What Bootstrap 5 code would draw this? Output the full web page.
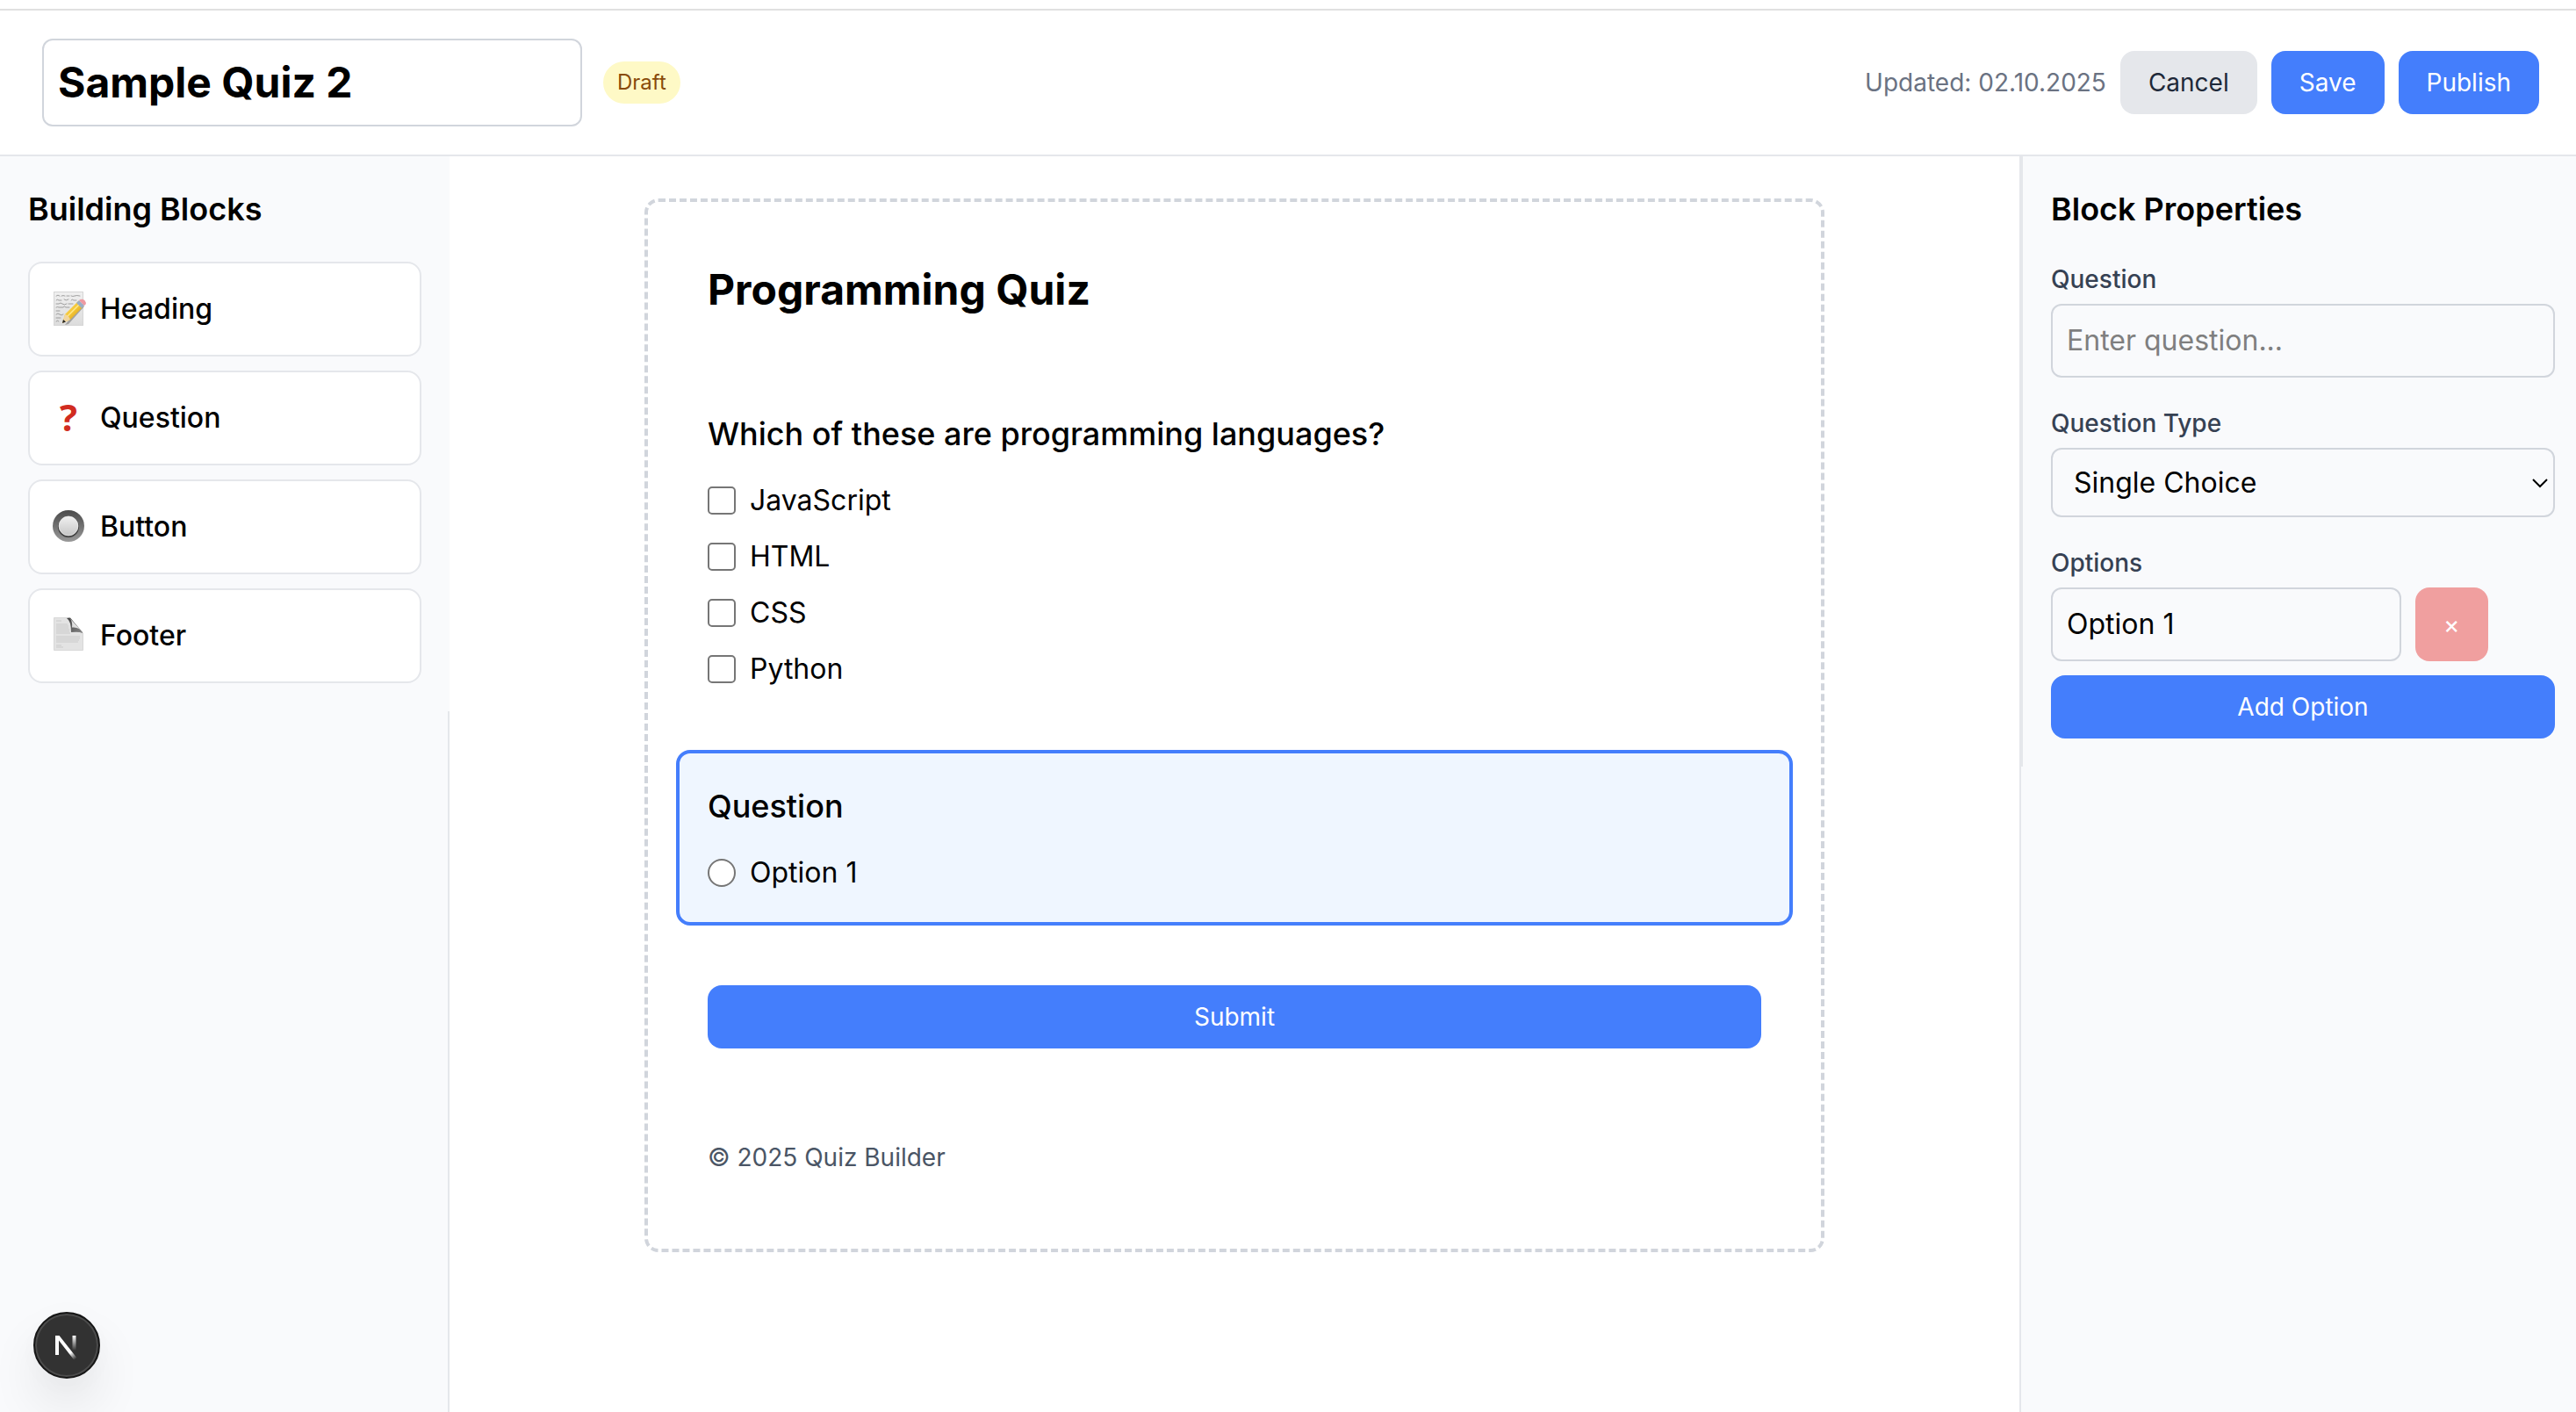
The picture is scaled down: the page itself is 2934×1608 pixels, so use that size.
<!DOCTYPE html>
<html lang="en">
<head>
<meta charset="utf-8">
<meta name="viewport" content="width=device-width, initial-scale=1">
<title>Quiz Builder</title>
<link rel="stylesheet" href="https://cdn.jsdelivr.net/npm/bootstrap@5.3.0/dist/css/bootstrap.min.css">
<style>
  :root { --qb-line: #e5e7eb; --qb-field: #d1d5dc; --qb-blue: #447efc; --qb-panel: #f9fafc; }
  body { font-family: Inter, "Liberation Sans", sans-serif; font-size: 32px; line-height: 48px; color: #000; background: #fff; }
  h1, h2, h3 { margin: 0; }
  .gap-16 { gap: 16px; }
  .gap-24 { gap: 24px; }

  .site-nav { height: 12px; border-bottom: 2px solid #e0e0e0; }
  .builder-bar { padding: 32px 42px 32px 48px; border-bottom: 2px solid var(--qb-line); }
  .title-input { width: 615px; padding: 16px; font-size: 48px; font-weight: 700; line-height: 64px; }
  .qb-input { color: #000; background-color: transparent; border: 2px solid var(--qb-field); border-radius: 12px; }
  .qb-input::placeholder { color: #7f7f7f; }
  .status-pill { padding: 8px 16px; border-radius: 24px; background: #fef9c6; color: #894b0a; font-size: 24px; font-weight: 400; line-height: 32px; }
  .updated { font-size: 28px; line-height: 40px; color: #6a7282; }
  .qb-btn { padding: 16px 32px; border: 0; border-radius: 16px; font-size: 28px; line-height: 40px; color: #fff; background: var(--qb-blue); }
  .qb-btn-muted { color: #1e2939; background: var(--qb-line); }
  .qb-btn-remove { padding: 22px 32px; background: #f09f9f; }
  .qb-btn-remove:disabled { color: #fff; background: #f09f9f; opacity: 1; }

  .side { flex: none; background: var(--qb-panel); }
  .side-blocks { width: 512px; border-right: 2px solid var(--qb-line); }
  .side-blocks .side-inner { margin-right: -2px; padding: 32px; background: var(--qb-panel); }
  .side-props { width: 634px; border-left: 2px solid var(--qb-line); }
  .side-props .side-inner { padding: 32px 24px 32px 32px; border-left: 2px solid var(--qb-line); }
  .side-title { margin-bottom: 32px; font-size: 36px; font-weight: 600; line-height: 56px; }
  .palette-item { padding: 28px 24px; border: 2px solid var(--qb-line); border-radius: 16px; background: #fff; color: #000; font-size: 32px; font-weight: 500; line-height: 48px; }
  .palette-icon { flex: none; width: 40px; height: 44px; }
  .palette-mark { font-family: "Open Sans", "Noto Sans", sans-serif; font-size: 42px; font-weight: 700; line-height: 42px; color: #d12c20; text-align: center; }

  .stage { padding: 48px; }
  .quiz-sheet { max-width: 1344px; min-height: 1200px; padding: 32px; border: 4px dashed var(--qb-field); border-radius: 16px; gap: 32px; }
  .quiz-block { padding: 32px; border: 4px solid transparent; border-radius: 16px; }
  .quiz-block-selected { border-color: var(--qb-blue); background: #eff6ff; }
  .quiz-title { font-size: 48px; font-weight: 700; line-height: 64px; }
  .quiz-question { margin-bottom: 24px; font-size: 36px; font-weight: 500; line-height: 56px; }
  .choice { appearance: none; flex: none; width: 32px; height: 32px; border: 2px solid #767676; border-radius: 5px; background: #fff; }
  .choice[type=radio] { border-radius: 50%; }
  .quiz-footer { margin: 0; font-size: 28px; line-height: 40px; color: #4a5565; }

  .field-label { display: block; margin-bottom: 8px; font-size: 28px; font-weight: 500; line-height: 40px; color: #364153; }
  .qb-text { padding: 16px; font-size: 32px; line-height: 48px; }
  .qb-select { appearance: none; padding: 16px 48px 16px 24px; font-size: 32px; line-height: 43px; background: no-repeat right 5px center/20px 20px url("data:image/svg+xml,%3Csvg xmlns='http://www.w3.org/2000/svg' viewBox='0 0 20 20'%3E%3Cpath d='M2 6l8 8 8-8' fill='none' stroke='%23000' stroke-width='2'/%3E%3C/svg%3E"); }
  .option-input { width: 399px; }
  .fields { gap: 32px; }

  .dev-badge { position: fixed; left: 38px; bottom: 38px; width: 76px; height: 76px; padding: 0; border: 2px solid #161616; border-radius: 50%; background: #323232; box-shadow: inset 0 0 0 2px #4c4c4c, 0 32px 64px -16px rgba(0,0,0,.24), 0 8px 40px rgba(0,0,0,.03); }
</style>
</head>
<body class="d-flex flex-column min-vh-100">
<nav class="site-nav" aria-label="Site"></nav>

<header class="builder-bar d-flex align-items-center justify-content-between">
  <div class="d-flex align-items-center gap-24">
    <input class="qb-input title-input" type="text" value="Sample Quiz 2" aria-label="Quiz title">
    <span class="status-pill">Draft</span>
  </div>
  <div class="d-flex align-items-center gap-16">
    <span class="updated">Updated: 02.10.2025</span>
    <button type="button" class="btn qb-btn qb-btn-muted">Cancel</button>
    <button type="button" class="btn qb-btn">Save</button>
    <button type="button" class="btn qb-btn">Publish</button>
  </div>
</header>

<div class="d-flex flex-grow-1">
  <aside class="side side-blocks">
    <div class="side-inner">
      <h2 class="side-title">Building Blocks</h2>
      <div class="d-flex flex-column gap-16">
        <button type="button" class="palette-item d-flex align-items-center gap-16">
          <svg class="palette-icon" viewBox="0 0 40 44" aria-hidden="true">
            <defs>
              <linearGradient id="paper" x1="0" y1="0" x2="0" y2="1"><stop offset="0" stop-color="#f0f0f0"/><stop offset="1" stop-color="#dcdcdc"/></linearGradient>
              <linearGradient id="pencil" x1="0" y1="0" x2="1" y2="1"><stop offset="0" stop-color="#ffe066"/><stop offset=".5" stop-color="#f3c433"/><stop offset="1" stop-color="#b98212"/></linearGradient>
            </defs>
            <rect x="3.500" y="2.500" width="33" height="38" fill="url(#paper)" stroke="#d6d6d6"/>
            <g fill="none" stroke="#8c8c8c" stroke-width=".8" stroke-linecap="round">
              <path d="M6 7q2-2 4 0M12 7q2-1 4 0M18 7h3M23 7q2 1 4 0t6 0M6 12q1-2 3 0h3M15 11q2 2 5 0M23 12q1-2 3 0h3"/>
              <path d="M6 16h3q2-2 4 0t5 0M20 16h5M6 20q2-1 3 0h5q1-2 3 0h4M6 24h4M6 28q2-2 4 0t4 0M6 32h5M6 36q2-2 3 0"/>
            </g>
            <path d="M16 40l4-1L38 19l-2-3z" fill="#555" opacity=".45"/>
            <path d="M13 38l3-10 15-15 6 6-15 15z" fill="url(#pencil)"/>
            <path d="M18 31l15-15" stroke="#ffe98c" stroke-width="1.500"/>
            <path d="M13 38l3-10q4 1 6 6z" fill="#f1d6a0"/>
            <path d="M13 38l1-4 3 2.500z" fill="#222"/>
            <path d="M29 15l3-3 6 6-3 3z" fill="#9aaec6"/>
            <path d="M32 12q2-2 5-1 2 1 3 4 0 2-2 3z" fill="#ee9aa2"/>
          </svg>
          Heading
        </button>
        <button type="button" class="palette-item d-flex align-items-center gap-16">
          <span class="palette-icon palette-mark" aria-hidden="true">?</span>
          Question
        </button>
        <button type="button" class="palette-item d-flex align-items-center gap-16">
          <svg class="palette-icon" viewBox="0 0 40 44" aria-hidden="true">
            <defs>
              <linearGradient id="ring" x1="0" y1="0" x2="0" y2="1"><stop offset="0" stop-color="#4a4a4a"/><stop offset="1" stop-color="#999"/></linearGradient>
              <linearGradient id="knob" x1="0" y1="0" x2="0" y2="1"><stop offset="0" stop-color="#f0f0f0"/><stop offset="1" stop-color="#c6c6c6"/></linearGradient>
            </defs>
            <circle cx="20" cy="21" r="18" fill="url(#ring)"/>
            <circle cx="20" cy="22" r="12" fill="#3e3e3e"/>
            <circle cx="20" cy="21" r="11" fill="url(#knob)" stroke="#fff" stroke-width=".6"/>
          </svg>
          Button
        </button>
        <button type="button" class="palette-item d-flex align-items-center gap-16">
          <svg class="palette-icon" viewBox="0 0 40 44" aria-hidden="true">
            <defs>
              <linearGradient id="curl" x1="1" y1="0" x2="0" y2="1"><stop offset="0" stop-color="#f4f4f4"/><stop offset="1" stop-color="#cfcfcf"/></linearGradient>
              <linearGradient id="fold" x1="1" y1="1" x2="0" y2="0"><stop offset="0" stop-color="#888"/><stop offset="1" stop-color="#3d3d3d"/></linearGradient>
            </defs>
            <path d="M3.500 1.500H21L36.500 19v19.500h-33z" fill="#e3e3e3" stroke="#d8d8d8"/>
            <g stroke="#cbcbcb" stroke-width="1"><path d="M6 5h6M6 9h13M6 11h14M6 13h14M6 15h15M6 17h15M6 19h16M6 23h27M6 25h27M6 27h26M6 29h25M6 33h6M6 35h8"/></g>
            <path d="M18 2q5 3 5 16 9-1 13 1V18L22 1.500z" fill="url(#fold)"/>
            <path d="M21 1.500q4 4 3 11 8-1 12.500 6z" fill="url(#curl)"/>
          </svg>
          Footer
        </button>
      </div>
    </div>
  </aside>

  <main class="stage flex-grow-1">
    <div class="quiz-sheet d-flex flex-column mx-auto">
      <section class="quiz-block"><h1 class="quiz-title">Programming Quiz</h1></section>
      <section class="quiz-block">
        <h2 class="quiz-question">Which of these are programming languages?</h2>
        <div class="d-flex flex-column gap-16">
          <label class="d-flex align-items-center gap-16"><input class="choice" type="checkbox">JavaScript</label>
          <label class="d-flex align-items-center gap-16"><input class="choice" type="checkbox">HTML</label>
          <label class="d-flex align-items-center gap-16"><input class="choice" type="checkbox">CSS</label>
          <label class="d-flex align-items-center gap-16"><input class="choice" type="checkbox">Python</label>
        </div>
      </section>
      <section class="quiz-block quiz-block-selected">
        <h2 class="quiz-question">Question</h2>
        <label class="d-flex align-items-center gap-16"><input class="choice" type="radio" name="q2">Option 1</label>
      </section>
      <section class="quiz-block"><button type="button" class="btn qb-btn d-block w-100">Submit</button></section>
      <section class="quiz-block"><p class="quiz-footer">© 2025 Quiz Builder</p></section>
    </div>
  </main>

  <aside class="side side-props">
    <div class="side-inner">
      <h2 class="side-title">Block Properties</h2>
      <form class="d-flex flex-column fields">
        <div>
          <label class="field-label" for="question">Question</label>
          <input id="question" class="qb-input qb-text d-block w-100" type="text" placeholder="Enter question...">
        </div>
        <div>
          <label class="field-label" for="qtype">Question Type</label>
          <select id="qtype" class="qb-input qb-select d-block w-100">
            <option>Single Choice</option>
            <option>Multiple Choice</option>
            <option>Text</option>
          </select>
        </div>
        <div>
          <label class="field-label" for="opt1">Options</label>
          <div class="d-flex flex-column gap-16">
            <div class="d-flex gap-16">
              <input id="opt1" class="qb-input qb-text option-input" type="text" value="Option 1">
              <button type="button" class="btn qb-btn qb-btn-remove" aria-label="Remove option" disabled>×</button>
            </div>
            <button type="button" class="btn qb-btn w-100">Add Option</button>
          </div>
        </div>
      </form>
    </div>
  </aside>
</div>

<button type="button" class="dev-badge" aria-label="Open dev tools">
  <svg class="d-block" width="72" height="72" viewBox="0 0 72 72" fill="none" aria-hidden="true">
    <defs>
      <linearGradient id="diag" gradientUnits="userSpaceOnUse" x1="36" y1="36" x2="47" y2="51"><stop stop-color="#fff"/><stop offset=".5" stop-color="#fff"/><stop offset="1" stop-color="#fff" stop-opacity="0"/></linearGradient>
      <linearGradient id="stem" gradientUnits="userSpaceOnUse" x1="0" y1="25" x2="0" y2="42"><stop stop-color="#fff"/><stop offset="1" stop-color="#fff" stop-opacity="0"/></linearGradient>
    </defs>
    <path d="M23 47V25h4.500L48 51l-3.500 2L27 30.500V47z" fill="url(#diag)"/>
    <path d="M42.500 25h4v17h-4z" fill="url(#stem)"/>
  </svg>
</button>
<script src="https://cdn.jsdelivr.net/npm/bootstrap@5.3.0/dist/js/bootstrap.bundle.min.js"></script>
</body>
</html>
